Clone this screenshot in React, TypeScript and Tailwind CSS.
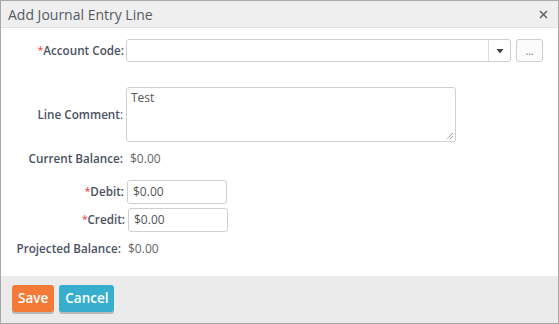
import React from "react";

const label = "text-[11.7px] font-semibold text-[#4b5262] text-right";
const font = { fontFamily: '"Open Sans", "Liberation Sans", sans-serif' };

function Req() {
  return <span className="text-[#e33] text-[10px] font-normal align-top relative top-[1px]">*</span>;
}

export default function App() {
  return (
    <div className="w-[559px] h-[324px] bg-white border border-[#a8a8a8] flex flex-col" style={font}>
      <div className="h-[27px] bg-[#efefef] border-b border-[#e2e2e2] flex items-center justify-between pl-[7px] pr-[10px]">
        <span className="text-[14px] text-[#555b63]">Add Journal Entry Line</span>
        <svg width="9" height="9" viewBox="0 0 9 9" className="mt-[1px]">
          <path d="M1 1L8 8M8 1L1 8" stroke="#666" strokeWidth="1.6" />
        </svg>
      </div>
      <div className="flex-1 flex flex-col pt-[11px]">
        <div className="flex items-center h-[23px]">
          <div className={`w-[123px] ${label}`}><Req />Account Code:</div>
          <div className="ml-[2px] w-[385px] h-[23px] border border-[#cfcfcf] rounded-[3px] flex">
            <div className="flex-1" />
            <div className="w-[22px] border-l border-[#dcdcdc] flex items-center justify-center">
              <svg width="8" height="6" viewBox="0 0 8 6"><path d="M0.5 1H7.5L4 5.5Z" fill="#444" /></svg>
            </div>
          </div>
          <div className="ml-[5px] w-[27px] h-[23px] border border-[#cfcfcf] rounded-[3px] bg-[#fbfbfb] flex items-center justify-center text-[10px] text-[#666] leading-none">...</div>
        </div>
        <div className="flex items-center mt-[25px]">
          <div className={`w-[123px] ${label} pr-[1px]`}>Line Comment<span className="font-normal">:</span></div>
          <div className="ml-[2px] w-[330px] h-[55px] border border-[#cfcfcf] rounded-[3px] px-[4px] pt-[1px] text-[12px] text-[#555] relative">
            Test
            <svg width="8" height="8" viewBox="0 0 8 8" className="absolute right-[1px] bottom-[1px]">
              <path d="M7 1L1 7M7 4L4 7" stroke="#666" strokeWidth="0.9" strokeDasharray="1 0.6" />
            </svg>
          </div>
        </div>
        <div className="flex items-center mt-[9px] h-[16px]">
          <div className={`w-[122px] ${label}`}>Current Balance:</div>
          <div className="ml-[7px] text-[12px] text-[#666]">$0.00</div>
        </div>
        <div className="flex items-center mt-[13px] h-[24px]">
          <div className={`w-[123px] ${label}`}><Req />Debit:</div>
          <div className="ml-[3px] w-[100px] h-[24px] border border-[#cfcfcf] rounded-[3px] flex items-center px-[5px] text-[12px] text-[#555]">$0.00</div>
        </div>
        <div className="flex items-center mt-[4px] h-[24px]">
          <div className={`w-[124px] ${label}`}><Req />Credit:</div>
          <div className="ml-[3px] w-[100px] h-[24px] border border-[#cfcfcf] rounded-[3px] flex items-center px-[5px] text-[12px] text-[#555]">$0.00</div>
        </div>
        <div className="flex items-center mt-[9px] h-[16px]">
          <div className={`w-[120px] ${label}`}>Projected Balance:</div>
          <div className="ml-[7px] text-[12px] text-[#666]">$0.00</div>
        </div>
      </div>
      <div className="h-[47px] bg-[#ebebeb] flex items-start pt-[9px] pl-[11px] gap-[5px]">
        <button className="h-[27px] px-[6px] rounded-[3px] bg-[#f47b37] text-white text-[13.5px] font-semibold shadow-[0_2px_0_#b8b8b8]">Save</button>
        <button className="h-[27px] px-[6px] rounded-[3px] bg-[#38aecf] text-white text-[13.5px] font-semibold shadow-[0_2px_0_#b8b8b8]">Cancel</button>
      </div>
    </div>
  );
}
